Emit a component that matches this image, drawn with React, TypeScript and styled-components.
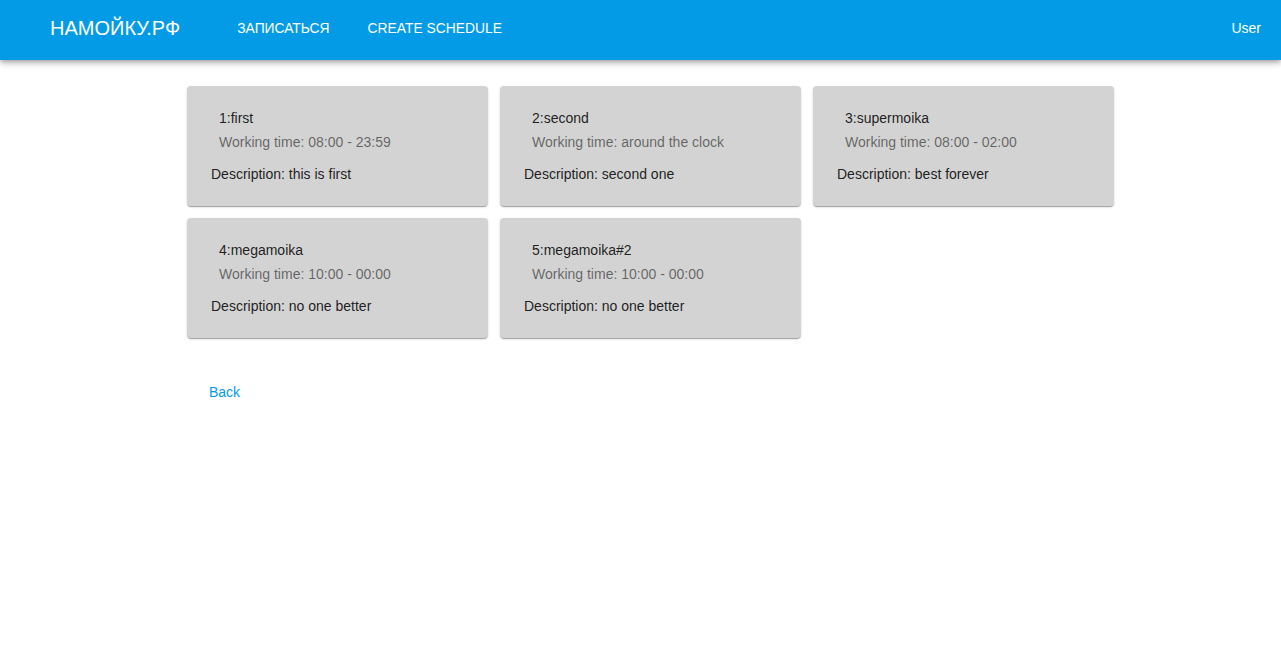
import React from "react";
import styled, { createGlobalStyle } from "styled-components";

const GlobalStyle = createGlobalStyle`
  html, body {
    margin: 0;
    padding: 0;
    background: #ffffff;
    font-family: "Liberation Sans", Arial, sans-serif;
  }
  * { box-sizing: border-box; }
`;

const AppBar = styled.header`
  height: 60px;
  background: #039be5;
  color: #ffffff;
  display: flex;
  align-items: center;
  padding: 0 20px 0 50px;
  box-shadow: 0px 2px 4px -1px rgba(0,0,0,0.2), 0px 4px 5px 0px rgba(0,0,0,0.14), 0px 1px 10px 0px rgba(0,0,0,0.12);
`;

const Logo = styled.div`
  font-size: 20px;
  line-height: 24px;
  font-weight: 400;
  margin-right: 57px;
  margin-top: -4px;
`;

const NavItem = styled.a`
  font-size: 13.85px;
  line-height: 20px;
  text-transform: uppercase;
  color: #ffffff;
  text-decoration: none;
  margin-right: 38px;
  margin-top: -4px;
  cursor: pointer;
`;

const Spacer = styled.div`
  flex: 1;
`;

const UserLabel = styled.div`
  font-size: 14px;
  line-height: 20px;
  margin-top: -4px;
`;

const Main = styled.main`
  width: 947px;
  margin: 0 auto;
  padding: 26px 0 0 20px;
`;

const Grid = styled.div`
  display: grid;
  width: 927px;
  grid-template-columns: repeat(3, 1fr);
  gap: 12px;
`;

const Card = styled.div`
  background: #d3d3d3;
  border-radius: 4px;
  padding: 22px 24px;
  box-shadow: 0px 2px 1px -1px rgba(0,0,0,0.2), 0px 1px 1px 0px rgba(0,0,0,0.14), 0px 1px 3px 0px rgba(0,0,0,0.12);
`;

const CardHeader = styled.div`
  padding-left: 8px;
  display: flex;
  flex-direction: column;
  gap: 4px;
`;

const Title = styled.div`
  font-size: 14px;
  line-height: 20px;
  color: rgba(0,0,0,0.87);
`;

const Secondary = styled.div`
  font-size: 14px;
  line-height: 20px;
  color: rgba(0,0,0,0.54);
`;

const Description = styled.div`
  margin-top: 12px;
  font-size: 14px;
  line-height: 20px;
  color: rgba(0,0,0,0.87);
`;

const BackLink = styled.a`
  display: inline-block;
  margin: 44px 0 0 22px;
  font-size: 14px;
  line-height: 20px;
  color: #039be5;
  text-decoration: none;
  cursor: pointer;
`;

const washes = [
  { id: 1, name: "first", time: "08:00 - 23:59", desc: "this is first" },
  { id: 2, name: "second", time: "around the clock", desc: "second one" },
  { id: 3, name: "supermoika", time: "08:00 - 02:00", desc: "best forever" },
  { id: 4, name: "megamoika", time: "10:00 - 00:00", desc: "no one better" },
  { id: 5, name: "megamoika#2", time: "10:00 - 00:00", desc: "no one better" },
];

export default function App() {
  return (
    <>
      <GlobalStyle />
      <AppBar>
        <Logo>НАМОЙКУ.РФ</Logo>
        <NavItem>Записаться</NavItem>
        <NavItem>Create schedule</NavItem>
        <Spacer />
        <UserLabel>User</UserLabel>
      </AppBar>
      <Main>
        <Grid>
          {washes.map((w) => (
            <Card key={w.id}>
              <CardHeader>
                <Title>{w.id}:{w.name}</Title>
                <Secondary>Working time: {w.time}</Secondary>
              </CardHeader>
              <Description>Description: {w.desc}</Description>
            </Card>
          ))}
        </Grid>
        <BackLink>Back</BackLink>
      </Main>
    </>
  );
}
